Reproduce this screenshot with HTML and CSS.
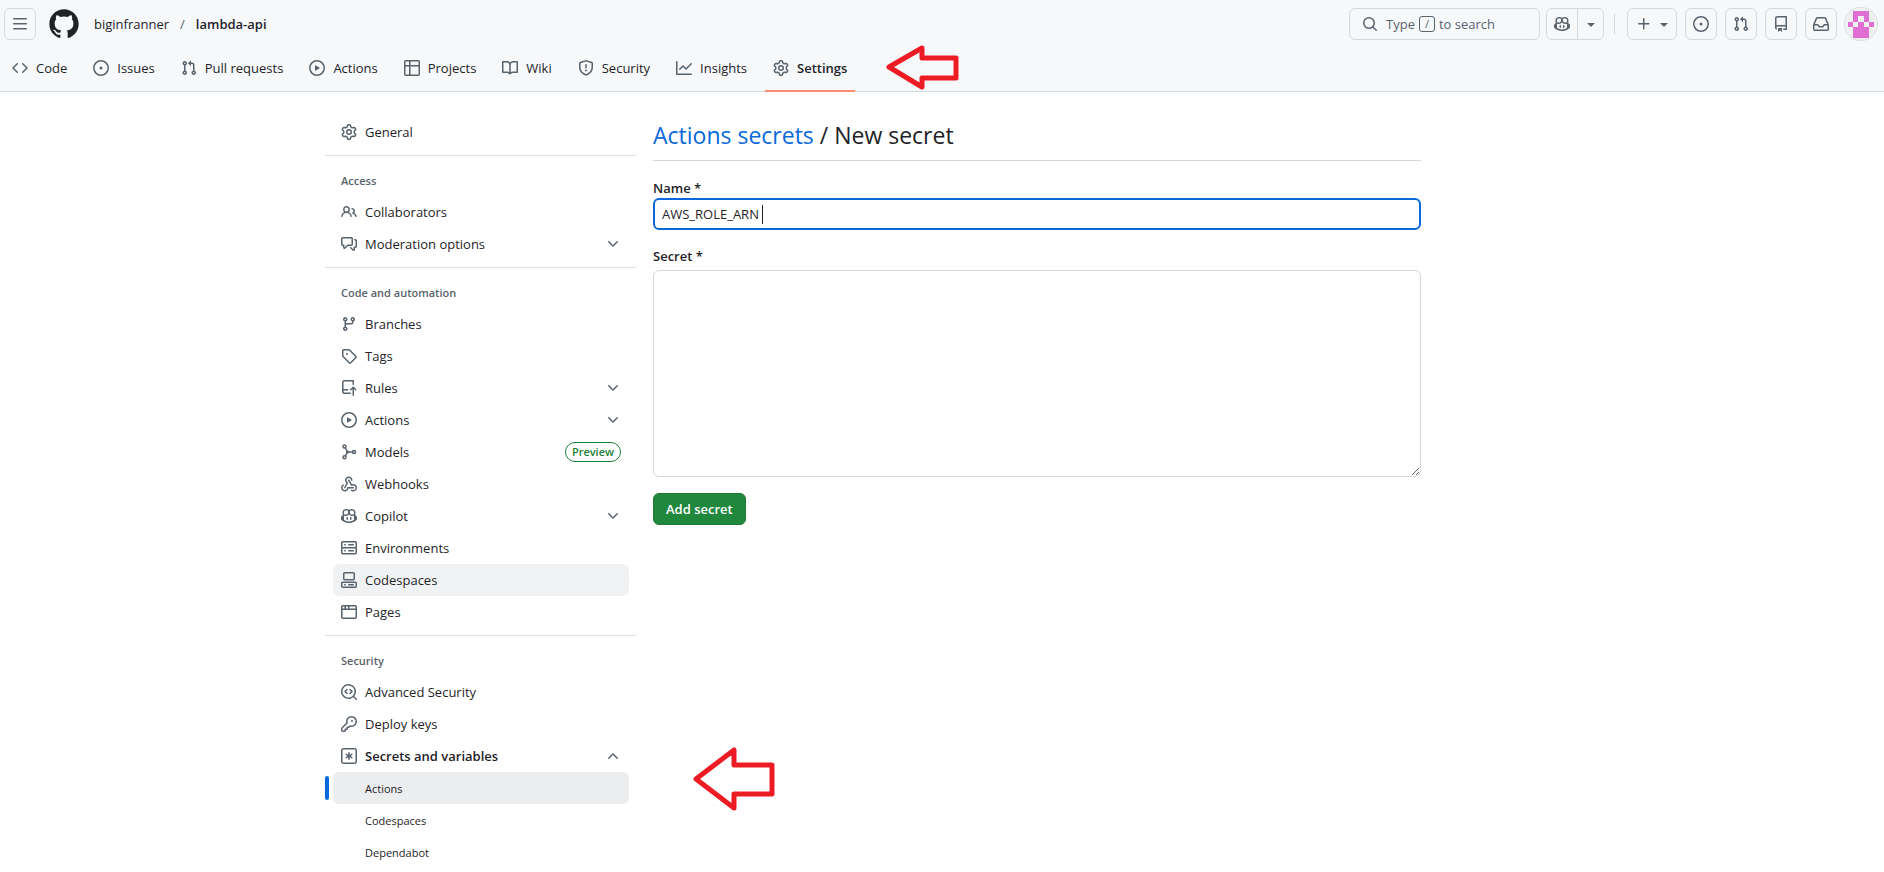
FILE: index.html
```html
<!DOCTYPE html>
<html lang="en">
  <head>
    <meta charset="UTF-8" />
    <meta name="viewport" content="width=device-width, initial-scale=1.0" />
    <title>New secret · biginfranner/lambda-api</title>
    <link rel="stylesheet" href="styles.css" />
  </head>
  <body>
    <!-- icons -->
    <svg class="sprite" aria-hidden="true">
      <symbol id="menu" viewBox="0 0 16 16"><path d="M1 2.75A.75.75 0 0 1 1.75 2h12.5a.75.75 0 0 1 0 1.5H1.75A.75.75 0 0 1 1 2.75Zm0 5A.75.75 0 0 1 1.75 7h12.5a.75.75 0 0 1 0 1.5H1.75A.75.75 0 0 1 1 7.75ZM1.75 12h12.5a.75.75 0 0 1 0 1.5H1.75a.75.75 0 0 1 0-1.5Z"/></symbol>
      <symbol id="logo" viewBox="0 0 24 24"><path d="M12 1C5.9225 1 1 5.9225 1 12C1 16.8675 4.14875 20.9787 8.52125 22.4362C9.07125 22.5325 9.2775 22.2025 9.2775 21.9137C9.2775 21.6525 9.26375 20.7862 9.26375 19.865C6.5 20.3737 5.785 19.1912 5.565 18.5725C5.44125 18.2562 4.905 17.28 4.4375 17.0187C4.0525 16.8125 3.5025 16.3037 4.42375 16.29C5.29 16.2762 5.90875 17.0875 6.115 17.4175C7.105 19.0812 8.68625 18.6137 9.31875 18.325C9.415 17.61 9.70375 17.1287 10.02 16.8537C7.5725 16.5787 5.015 15.63 5.015 11.4225C5.015 10.2262 5.44125 9.23625 6.1425 8.46625C6.0325 8.19125 5.6475 7.06375 6.2525 5.55125C6.2525 5.55125 7.17375 5.2625 9.2775 6.67875C10.1575 6.43125 11.0925 6.3075 12.0275 6.3075C12.9625 6.3075 13.8975 6.43125 14.7775 6.67875C16.8813 5.24875 17.8025 5.55125 17.8025 5.55125C18.4075 7.06375 18.0225 8.19125 17.9125 8.46625C18.6138 9.23625 19.04 10.2125 19.04 11.4225C19.04 15.6437 16.4688 16.5787 14.0213 16.8537C14.42 17.1975 14.7638 17.8575 14.7638 18.8887C14.7638 20.36 14.75 21.5425 14.75 21.9137C14.75 22.2025 14.9563 22.5462 15.5063 22.4362C19.8513 20.9787 23 16.8537 23 12C23 5.9225 18.0775 1 12 1Z"/></symbol>
      <symbol id="code" viewBox="0 0 16 16"><path d="m11.28 3.22 4.25 4.25a.75.75 0 0 1 0 1.06l-4.25 4.25a.749.749 0 0 1-1.275-.326.749.749 0 0 1 .215-.734L13.94 8l-3.72-3.72a.749.749 0 0 1 .326-1.275.749.749 0 0 1 .734.215Zm-6.56 0a.751.751 0 0 1 1.042.018.751.751 0 0 1 .018 1.042L2.06 8l3.72 3.72a.749.749 0 0 1-.326 1.275.749.749 0 0 1-.734-.215L.47 8.53a.75.75 0 0 1 0-1.06Z"/></symbol>
      <symbol id="issue" viewBox="0 0 16 16"><path d="M8 9.5a1.5 1.5 0 1 0 0-3 1.5 1.5 0 0 0 0 3Z"/><path d="M8 0a8 8 0 1 1 0 16A8 8 0 0 1 8 0ZM1.5 8a6.5 6.5 0 1 0 13 0 6.5 6.5 0 0 0-13 0Z"/></symbol>
      <symbol id="pull" viewBox="0 0 16 16"><path d="M1.5 3.25a2.25 2.25 0 1 1 3 2.122v5.256a2.251 2.251 0 1 1-1.5 0V5.372A2.25 2.25 0 0 1 1.5 3.25Zm5.677-.177L9.573.677A.25.25 0 0 1 10 .854V2.5h1A2.5 2.5 0 0 1 13.5 5v5.628a2.251 2.251 0 1 1-1.5 0V5a1 1 0 0 0-1-1h-1v1.646a.25.25 0 0 1-.427.177L7.177 3.427a.25.25 0 0 1 0-.354ZM3.75 2.5a.75.75 0 1 0 0 1.5.75.75 0 0 0 0-1.5Zm0 9.5a.75.75 0 1 0 0 1.5.75.75 0 0 0 0-1.5Zm8.25.75a.75.75 0 1 0 1.5 0 .75.75 0 0 0-1.5 0Z"/></symbol>
      <symbol id="play" viewBox="0 0 16 16"><path d="M8 0a8 8 0 1 1 0 16A8 8 0 0 1 8 0ZM1.5 8a6.5 6.5 0 1 0 13 0 6.5 6.5 0 0 0-13 0Zm4.879-2.773 4.264 2.559a.25.25 0 0 1 0 .428l-4.264 2.559A.25.25 0 0 1 6 10.559V5.442a.25.25 0 0 1 .379-.215Z"/></symbol>
      <symbol id="table" viewBox="0 0 16 16"><path d="M0 1.75C0 .784.784 0 1.75 0h12.5C15.216 0 16 .784 16 1.75v12.5A1.75 1.75 0 0 1 14.25 16H1.75A1.75 1.75 0 0 1 0 14.25ZM6.5 6.5v8h7.75a.25.25 0 0 0 .25-.25V6.5Zm8-1.5V1.75a.25.25 0 0 0-.25-.25H6.5V5Zm-13 1.5v7.75c0 .138.112.25.25.25H5v-8ZM5 5V1.5H1.75a.25.25 0 0 0-.25.25V5Z"/></symbol>
      <symbol id="book" viewBox="0 0 16 16"><path d="M0 1.75A.75.75 0 0 1 .75 1h4.253c1.227 0 2.317.59 3 1.501A3.743 3.743 0 0 1 11.006 1h4.245a.75.75 0 0 1 .75.75v10.5a.75.75 0 0 1-.75.75h-4.507a2.25 2.25 0 0 0-1.591.659l-.622.621a.75.75 0 0 1-1.06 0l-.622-.621A2.25 2.25 0 0 0 5.258 13H.75a.75.75 0 0 1-.75-.75Zm7.251 10.324.004-5.073-.002-2.253A2.25 2.25 0 0 0 5.003 2.5H1.5v9h3.757a3.75 3.75 0 0 1 1.994.574ZM8.755 4.75l-.004 7.322a3.752 3.752 0 0 1 1.992-.572H14.5v-9h-3.495a2.25 2.25 0 0 0-2.25 2.25Z"/></symbol>
      <symbol id="shield" viewBox="0 0 16 16"><path d="M7.467.133a1.748 1.748 0 0 1 1.066 0l5.25 1.68A1.75 1.75 0 0 1 15 3.48V7c0 1.566-.32 3.182-1.303 4.682-.983 1.498-2.585 2.813-5.032 3.855a1.697 1.697 0 0 1-1.33 0c-2.447-1.042-4.049-2.357-5.032-3.855C1.32 10.182 1 8.566 1 7V3.48a1.75 1.75 0 0 1 1.217-1.667Zm.61 1.429a.25.25 0 0 0-.153 0l-5.25 1.68a.25.25 0 0 0-.174.238V7c0 1.358.275 2.666 1.057 3.86.784 1.194 2.121 2.34 4.366 3.297a.196.196 0 0 0 .154 0c2.245-.956 3.582-2.104 4.366-3.298C13.225 9.666 13.5 8.36 13.5 7V3.48a.251.251 0 0 0-.174-.237l-5.25-1.68ZM8.75 4.75v3a.75.75 0 0 1-1.5 0v-3a.75.75 0 0 1 1.5 0ZM9 10.5a1 1 0 1 1-2 0 1 1 0 0 1 2 0Z"/></symbol>
      <symbol id="graph" viewBox="0 0 16 16"><path d="M1.5 1.75V13.5h13.75a.75.75 0 0 1 0 1.5H.75a.75.75 0 0 1-.75-.75V1.75a.75.75 0 0 1 1.5 0Zm14.28 2.53-5.25 5.25a.75.75 0 0 1-1.06 0L7 7.06 4.28 9.78a.751.751 0 0 1-1.042-.018.751.751 0 0 1-.018-1.042l3.25-3.25a.75.75 0 0 1 1.06 0L10 7.94l4.72-4.72a.751.751 0 0 1 1.042.018.751.751 0 0 1 .018 1.042Z"/></symbol>
      <symbol id="gear" viewBox="0 0 16 16"><path d="M8 0a8.2 8.2 0 0 1 .701.031C9.444.095 9.99.645 10.16 1.29l.288 1.107c.018.066.079.158.212.224.231.114.454.243.668.386.123.082.233.09.299.071l1.103-.303c.644-.176 1.392.021 1.82.63.27.385.506.792.704 1.218.315.675.111 1.422-.364 1.891l-.814.806c-.049.048-.098.147-.088.294.016.257.016.515 0 .772-.01.147.038.246.088.294l.814.806c.475.469.679 1.216.364 1.891a7.977 7.977 0 0 1-.704 1.217c-.428.61-1.176.807-1.82.63l-1.102-.302c-.067-.019-.177-.011-.3.071a5.909 5.909 0 0 1-.668.386c-.133.066-.194.158-.211.224l-.29 1.106c-.168.646-.715 1.196-1.458 1.26a8.006 8.006 0 0 1-1.402 0c-.743-.064-1.289-.614-1.458-1.26l-.289-1.106c-.018-.066-.079-.158-.212-.224a5.738 5.738 0 0 1-.668-.386c-.123-.082-.233-.09-.299-.071l-1.103.303c-.644.176-1.392-.021-1.82-.63a8.12 8.12 0 0 1-.704-1.218c-.315-.675-.111-1.422.363-1.891l.815-.806c.05-.048.098-.147.088-.294a6.214 6.214 0 0 1 0-.772c.01-.147-.038-.246-.088-.294l-.815-.806C.635 6.045.431 5.298.746 4.623a7.92 7.92 0 0 1 .704-1.217c.428-.61 1.176-.807 1.82-.63l1.102.302c.067.019.177.011.3-.071.214-.143.437-.272.668-.386.133-.066.194-.158.211-.224l.29-1.106C6.009.645 6.556.095 7.299.03 7.53.01 7.764 0 8 0Zm-.571 1.525c-.036.003-.108.036-.137.146l-.289 1.105c-.147.561-.549.967-.998 1.189-.173.086-.34.183-.5.29-.417.278-.97.423-1.529.27l-1.103-.303c-.109-.03-.175.016-.195.045-.22.312-.412.644-.573.99-.014.031-.021.11.059.19l.815.806c.411.406.562.957.53 1.456a4.709 4.709 0 0 0 0 .582c.032.499-.119 1.05-.53 1.456l-.815.806c-.081.08-.073.159-.059.19.162.346.353.677.573.989.02.03.085.076.195.046l1.102-.303c.56-.153 1.113-.008 1.53.27.161.107.328.204.501.29.447.222.85.629.997 1.189l.289 1.105c.029.109.101.143.137.146a6.6 6.6 0 0 0 1.142 0c.036-.003.108-.036.137-.146l.289-1.105c.147-.561.549-.967.998-1.189.173-.086.34-.183.5-.29.417-.278.97-.423 1.529-.27l1.103.303c.109.029.175-.016.195-.045.22-.313.411-.644.573-.99.014-.031.021-.11-.059-.19l-.815-.806c-.411-.406-.562-.957-.53-1.456a4.709 4.709 0 0 0 0-.582c-.032-.499.119-1.05.53-1.456l.815-.806c.081-.08.073-.159.059-.19a6.464 6.464 0 0 0-.573-.989c-.02-.03-.085-.076-.195-.046l-1.102.303c-.56.153-1.113.008-1.53-.27a4.44 4.44 0 0 0-.501-.29c-.447-.222-.85-.629-.997-1.189l-.289-1.105c-.029-.11-.101-.143-.137-.146a6.6 6.6 0 0 0-1.142 0ZM11 8a3 3 0 1 1-6 0 3 3 0 0 1 6 0ZM9.5 8a1.5 1.5 0 1 0-3.001.001A1.5 1.5 0 0 0 9.5 8Z"/></symbol>
      <symbol id="people" viewBox="0 0 16 16"><path d="M2 5.5a3.5 3.5 0 1 1 5.898 2.549 5.508 5.508 0 0 1 3.034 4.084.75.75 0 1 1-1.482.235 4 4 0 0 0-7.9 0 .75.75 0 0 1-1.482-.236A5.507 5.507 0 0 1 3.102 8.05 3.493 3.493 0 0 1 2 5.5ZM11 4a3.001 3.001 0 0 1 2.22 5.018 5.01 5.01 0 0 1 2.56 3.012.749.749 0 0 1-.885.954.752.752 0 0 1-.549-.514 3.507 3.507 0 0 0-2.522-2.372.75.75 0 0 1-.574-.73v-.352a.75.75 0 0 1 .416-.672A1.5 1.5 0 0 0 11 5.5.75.75 0 0 1 11 4Zm-5.5-.5a2 2 0 1 0-.001 3.999A2 2 0 0 0 5.5 3.5Z"/></symbol>
      <symbol id="comments" viewBox="0 0 16 16"><path d="M1.75 1h8.5c.966 0 1.75.784 1.75 1.75v5.5A1.75 1.75 0 0 1 10.25 10H7.061l-2.574 2.573A1.458 1.458 0 0 1 2 11.543V10h-.25A1.75 1.75 0 0 1 0 8.25v-5.5C0 1.784.784 1 1.75 1ZM1.5 2.75v5.5c0 .138.112.25.25.25h1a.75.75 0 0 1 .75.75v2.19l2.72-2.72a.749.749 0 0 1 .53-.22h3.5a.25.25 0 0 0 .25-.25v-5.5a.25.25 0 0 0-.25-.25h-8.5a.25.25 0 0 0-.25.25Zm13 2a.25.25 0 0 0-.25-.25h-.5a.75.75 0 0 1 0-1.5h.5c.966 0 1.75.784 1.75 1.75v5.5A1.75 1.75 0 0 1 14.25 12H14v1.543a1.458 1.458 0 0 1-2.487 1.03L9.22 12.28a.749.749 0 0 1 .326-1.275.749.749 0 0 1 .734.215l2.22 2.22v-2.19a.75.75 0 0 1 .75-.75h1a.25.25 0 0 0 .25-.25Z"/></symbol>
      <symbol id="branch" viewBox="0 0 16 16"><path d="M9.5 3.25a2.25 2.25 0 1 1 3 2.122V6A2.5 2.5 0 0 1 10 8.5H6a1 1 0 0 0-1 1v1.128a2.251 2.251 0 1 1-1.5 0V5.372a2.25 2.25 0 1 1 1.5 0v1.836A2.493 2.493 0 0 1 6 7h4a1 1 0 0 0 1-1v-.628A2.25 2.25 0 0 1 9.5 3.25Zm-6 0a.75.75 0 1 0 1.5 0 .75.75 0 0 0-1.5 0Zm8.25-.75a.75.75 0 1 0 0 1.5.75.75 0 0 0 0-1.5ZM4.25 12a.75.75 0 1 0 0 1.5.75.75 0 0 0 0-1.5Z"/></symbol>
      <symbol id="tag" viewBox="0 0 16 16"><path d="M1 7.775V2.75C1 1.784 1.784 1 2.75 1h5.025c.464 0 .91.184 1.238.513l6.25 6.25a1.75 1.75 0 0 1 0 2.474l-5.026 5.026a1.75 1.75 0 0 1-2.474 0l-6.25-6.25A1.752 1.752 0 0 1 1 7.775Zm1.5 0c0 .066.026.13.073.177l6.25 6.25a.25.25 0 0 0 .354 0l5.025-5.025a.25.25 0 0 0 0-.354l-6.25-6.25a.25.25 0 0 0-.177-.073H2.75a.25.25 0 0 0-.25.25ZM6 5a1 1 0 1 1 0 2 1 1 0 0 1 0-2Z"/></symbol>
      <symbol id="repo-push" viewBox="0 0 16 16"><path d="M1 2.5A2.5 2.5 0 0 1 3.5 0h8.75a.75.75 0 0 1 .75.75v3.5a.75.75 0 0 1-1.5 0V1.5h-8a1 1 0 0 0-1 1v6.708A2.493 2.493 0 0 1 3.5 9h3.25a.75.75 0 0 1 0 1.5H3.5a1 1 0 0 0 0 2h5.75a.75.75 0 0 1 0 1.5H3.5A2.5 2.5 0 0 1 1 11.5Zm13.23 7.79h-.001l-1.224-1.224v6.184a.75.75 0 0 1-1.5 0V9.066L10.28 10.29a.75.75 0 0 1-1.06-1.061l2.505-2.504a.75.75 0 0 1 1.06 0L15.29 9.23a.751.751 0 0 1-.018 1.042.751.751 0 0 1-1.042.018Z"/></symbol>
      <symbol id="model" viewBox="0 0 16 16"><g fill="none" stroke="currentColor" stroke-width="1.5"><circle cx="3.5" cy="2.5" r="1.5"/><circle cx="3.5" cy="13.25" r="1.5"/><circle cx="13" cy="8" r="1.5"/><path d="M4.4 4 6.5 8l-2.1 3.8M6.5 8h5"/></g><circle cx="6.5" cy="8" r="1.5"/></symbol>
      <symbol id="webhook" viewBox="0 0 16 16"><path d="M5.5 4.25a2.25 2.25 0 0 1 4.5 0 .75.75 0 0 0 1.5 0 3.75 3.75 0 1 0-6.14 2.889l-2.272 4.258a.75.75 0 0 0 1.324.706L7 7.25a.75.75 0 0 0-.309-1.015A2.25 2.25 0 0 1 5.5 4.25Z"/><path d="M7.364 3.607a.75.75 0 0 1 1.03.257l2.608 4.349a3.75 3.75 0 1 1-.628 6.785.75.75 0 0 1 .752-1.299 2.25 2.25 0 1 0-.033-3.88.75.75 0 0 1-1.03-.256L7.107 4.636a.75.75 0 0 1 .257-1.03Z"/><path d="M2.9 8.776A.75.75 0 0 1 2.625 9.8 2.25 2.25 0 1 0 6 11.75a.75.75 0 0 1 .75-.751h5.5a.75.75 0 0 1 0 1.5H7.425a3.751 3.751 0 1 1-5.55-3.998.75.75 0 0 1 1.024.274Z"/></symbol>
      <symbol id="copilot" viewBox="0 0 16 16"><path d="M7.998 15.035c-4.562 0-7.873-2.914-7.998-3.749V9.338c.085-.628.677-1.686 1.588-2.065.013-.07.024-.143.036-.218.029-.183.06-.384.126-.612-.201-.508-.254-1.084-.254-1.656 0-.87.128-1.769.693-2.484.579-.733 1.494-1.124 2.724-1.261 1.206-.134 2.262.034 2.944.765.05.053.096.108.139.165.044-.057.094-.112.143-.165.682-.731 1.738-.899 2.944-.765 1.23.137 2.145.528 2.724 1.261.566.715.693 1.614.693 2.484 0 .572-.053 1.148-.254 1.656.066.228.098.429.126.612.012.076.024.148.037.218.924.385 1.522 1.471 1.591 2.095v1.872c0 .766-3.351 3.795-8.002 3.795Zm0-1.485c2.28 0 4.584-1.11 5.002-1.433V7.862l-.023-.116c-.49.21-1.075.291-1.727.291-1.146 0-2.059-.327-2.71-.991A3.222 3.222 0 0 1 8 6.303a3.24 3.24 0 0 1-.544.743c-.65.664-1.563.991-2.71.991-.652 0-1.236-.081-1.727-.291l-.023.116v4.255c.419.323 2.722 1.433 5.002 1.433ZM6.762 2.83c-.193-.206-.637-.413-1.682-.297-1.019.113-1.479.404-1.713.7-.247.312-.369.789-.369 1.554 0 .793.129 1.171.308 1.371.162.181.519.379 1.442.379.853 0 1.339-.235 1.638-.54.315-.322.527-.827.617-1.553.117-.935-.037-1.395-.241-1.614Zm4.155-.297c-1.044-.116-1.488.091-1.681.297-.204.219-.359.679-.242 1.614.091.726.303 1.231.618 1.553.299.305.784.54 1.638.54.922 0 1.28-.198 1.442-.379.179-.2.308-.578.308-1.371 0-.765-.123-1.242-.37-1.554-.233-.296-.693-.587-1.713-.7Z"/><path d="M6.25 9.037a.75.75 0 0 1 .75.75v1.501a.75.75 0 0 1-1.5 0V9.787a.75.75 0 0 1 .75-.75Zm4.25.75v1.501a.75.75 0 0 1-1.5 0V9.787a.75.75 0 0 1 1.5 0Z"/></symbol>
      <symbol id="server" viewBox="0 0 16 16"><path d="M1.75 1h12.5c.966 0 1.75.784 1.75 1.75v4c0 .372-.116.717-.314 1 .198.283.314.628.314 1v4a1.75 1.75 0 0 1-1.75 1.75H1.75A1.75 1.75 0 0 1 0 12.75v-4c0-.358.109-.707.314-1a1.739 1.739 0 0 1-.314-1v-4C0 1.784.784 1 1.75 1ZM1.5 2.75v4c0 .138.112.25.25.25h12.5a.25.25 0 0 0 .25-.25v-4a.25.25 0 0 0-.25-.25H1.75a.25.25 0 0 0-.25.25Zm.25 5.75a.25.25 0 0 0-.25.25v4c0 .138.112.25.25.25h12.5a.25.25 0 0 0 .25-.25v-4a.25.25 0 0 0-.25-.25ZM7 4.75A.75.75 0 0 1 7.75 4h4.5a.75.75 0 0 1 0 1.5h-4.5A.75.75 0 0 1 7 4.75ZM7.75 10h4.5a.75.75 0 0 1 0 1.5h-4.5a.75.75 0 0 1 0-1.5ZM3 4.75A.75.75 0 0 1 3.75 4h.5a.75.75 0 0 1 0 1.5h-.5A.75.75 0 0 1 3 4.75ZM3.75 10h.5a.75.75 0 0 1 0 1.5h-.5a.75.75 0 0 1 0-1.5Z"/></symbol>
      <symbol id="codespaces" viewBox="0 0 16 16"><path d="M0 11.25c0-.966.784-1.75 1.75-1.75h12.5c.966 0 1.75.784 1.75 1.75v3A1.75 1.75 0 0 1 14.25 16H1.75A1.75 1.75 0 0 1 0 14.25Zm2-9.5C2 .784 2.784 0 3.75 0h8.5C13.216 0 14 .784 14 1.75v5a1.75 1.75 0 0 1-1.75 1.75h-8.5A1.75 1.75 0 0 1 2 6.75Zm1.75-.25a.25.25 0 0 0-.25.25v5c0 .138.112.25.25.25h8.5a.25.25 0 0 0 .25-.25v-5a.25.25 0 0 0-.25-.25Zm-2 9.5a.25.25 0 0 0-.25.25v3c0 .138.112.25.25.25h12.5a.25.25 0 0 0 .25-.25v-3a.25.25 0 0 0-.25-.25Z"/><path d="M7 12.75a.75.75 0 0 1 .75-.75h4.5a.75.75 0 0 1 0 1.5h-4.5a.75.75 0 0 1-.75-.75Zm-4 0a.75.75 0 0 1 .75-.75h.5a.75.75 0 0 1 0 1.5h-.5a.75.75 0 0 1-.75-.75Z"/></symbol>
      <symbol id="browser" viewBox="0 0 16 16"><path d="M0 2.75C0 1.784.784 1 1.75 1h12.5c.966 0 1.75.784 1.75 1.75v10.5A1.75 1.75 0 0 1 14.25 15H1.75A1.75 1.75 0 0 1 0 13.25ZM14.5 6h-13v7.25c0 .138.112.25.25.25h12.5a.25.25 0 0 0 .25-.25Zm-6-3.5v2h6V2.75a.25.25 0 0 0-.25-.25ZM5 2.5v2h2v-2Zm-3.25 0a.25.25 0 0 0-.25.25V4.5h2v-2Z"/></symbol>
      <symbol id="codescan" viewBox="0 0 16 16"><path d="M8.47 4.97a.75.75 0 0 0 0 1.06L9.94 7.5 8.47 8.97a.75.75 0 1 0 1.06 1.06l2-2a.75.75 0 0 0 0-1.06l-2-2a.75.75 0 0 0-1.06 0ZM6.53 6.03a.75.75 0 0 0-1.06-1.06l-2 2a.75.75 0 0 0 0 1.06l2 2a.75.75 0 1 0 1.06-1.06L5.06 7.5l1.47-1.47Z"/><path d="M12.246 13.307a7.501 7.501 0 1 1 1.06-1.06l2.474 2.473a.75.75 0 1 1-1.06 1.06l-2.474-2.473ZM1.5 7.5a6.002 6.002 0 0 0 3.608 5.504 6.002 6.002 0 0 0 6.486-1.117.748.748 0 0 1 .292-.293A6 6 0 1 0 1.5 7.5Z"/></symbol>
      <symbol id="key" viewBox="0 0 16 16"><path d="M10.5 0a5.499 5.499 0 1 1-1.288 10.848l-.932.932a.749.749 0 0 1-.53.22H7v.75a.749.749 0 0 1-.22.53l-.5.5a.749.749 0 0 1-.53.22H5v.75a.749.749 0 0 1-.22.53l-.5.5a.749.749 0 0 1-.53.22h-2A1.75 1.75 0 0 1 0 14.25v-2c0-.199.079-.389.22-.53l4.932-4.932A5.5 5.5 0 0 1 10.5 0Zm-4 5.5c-.001.431.069.86.205 1.269a.75.75 0 0 1-.181.768L1.5 12.56v1.69c0 .138.112.25.25.25h1.69l.06-.06v-1.19a.75.75 0 0 1 .75-.75h1.19l.06-.06v-1.19a.75.75 0 0 1 .75-.75h1.19l1.023-1.025a.75.75 0 0 1 .768-.18A4 4 0 1 0 6.5 5.5ZM11 6a1 1 0 1 1 0-2 1 1 0 0 1 0 2Z"/></symbol>
      <symbol id="asterisk" viewBox="0 0 16 16"><path d="M0 2.75A2.75 2.75 0 0 1 2.75 0h10.5A2.75 2.75 0 0 1 16 2.75v10.5A2.75 2.75 0 0 1 13.25 16H2.75A2.75 2.75 0 0 1 0 13.25ZM2.75 1.5c-.69 0-1.25.56-1.25 1.25v10.5c0 .69.56 1.25 1.25 1.25h10.5c.69 0 1.25-.56 1.25-1.25V2.75c0-.69-.56-1.25-1.25-1.25Z"/><path d="M8 4a.75.75 0 0 1 .75.75V6.7l1.69-.975a.75.75 0 0 1 .75 1.3L9.5 8l1.69.976a.75.75 0 0 1-.75 1.298L8.75 9.3v1.951a.75.75 0 0 1-1.5 0V9.299l-1.69.976a.75.75 0 0 1-.75-1.3L6.5 8l-1.69-.975a.75.75 0 0 1 .75-1.3l1.69.976V4.75A.75.75 0 0 1 8 4Z"/></symbol>
      <symbol id="chevron" viewBox="0 0 16 16"><path d="M12.78 5.22a.749.749 0 0 1 0 1.06l-4.25 4.25a.749.749 0 0 1-1.06 0L3.22 6.28a.749.749 0 1 1 1.06-1.06L8 8.939l3.72-3.719a.749.749 0 0 1 1.06 0Z"/></symbol>
      <symbol id="triangle" viewBox="0 0 16 16"><path d="m4.427 7.427 3.396 3.396a.25.25 0 0 0 .354 0l3.396-3.396A.25.25 0 0 0 11.396 7H4.604a.25.25 0 0 0-.177.427Z"/></symbol>
      <symbol id="plus" viewBox="0 0 16 16"><path d="M7.75 2a.75.75 0 0 1 .75.75V7h4.25a.75.75 0 0 1 0 1.5H8.5v4.25a.75.75 0 0 1-1.5 0V8.5H2.75a.75.75 0 0 1 0-1.5H7V2.75A.75.75 0 0 1 7.75 2Z"/></symbol>
      <symbol id="search" viewBox="0 0 16 16"><path d="M10.68 11.74a6 6 0 0 1-7.922-8.982 6 6 0 0 1 8.982 7.922l3.04 3.04a.749.749 0 0 1-.326 1.275.749.749 0 0 1-.734-.215ZM11.5 7a4.499 4.499 0 1 0-8.997 0A4.499 4.499 0 0 0 11.5 7Z"/></symbol>
      <symbol id="repo" viewBox="0 0 16 16"><path d="M2 2.5A2.5 2.5 0 0 1 4.5 0h8.75a.75.75 0 0 1 .75.75v12.5a.75.75 0 0 1-.75.75h-2.5a.75.75 0 0 1 0-1.5h1.75v-2h-8a1 1 0 0 0-.714 1.7.75.75 0 1 1-1.072 1.05A2.495 2.495 0 0 1 2 11.5Zm10.5-1h-8a1 1 0 0 0-1 1v6.708A2.486 2.486 0 0 1 4.5 9h8ZM5 12.25a.25.25 0 0 1 .25-.25h3.5a.25.25 0 0 1 .25.25v3.25a.25.25 0 0 1-.4.2l-1.45-1.087a.249.249 0 0 0-.3 0L5.4 15.7a.25.25 0 0 1-.4-.2Z"/></symbol>
      <symbol id="inbox" viewBox="0 0 16 16"><path d="M2.8 2.06A1.75 1.75 0 0 1 4.41 1h7.18c.7 0 1.333.417 1.61 1.06l2.74 6.395c.04.093.06.194.06.295v4.5A1.75 1.75 0 0 1 14.25 15H1.75A1.75 1.75 0 0 1 0 13.25v-4.5c0-.101.02-.202.06-.295Zm1.61.44a.25.25 0 0 0-.23.152L1.887 8H4.75a.75.75 0 0 1 .6.3L6.625 10h2.75l1.275-1.7a.75.75 0 0 1 .6-.3h2.863L11.82 2.652a.25.25 0 0 0-.23-.152Zm10.09 7h-2.875l-1.275 1.7a.75.75 0 0 1-.6.3h-3.5a.75.75 0 0 1-.6-.3L4.375 9.5H1.5v3.75c0 .138.112.25.25.25h12.5a.25.25 0 0 0 .25-.25Z"/></symbol>
    </svg>

    <header class="header">
      <div class="topbar">
        <button class="iconBtn" type="button" aria-label="Open menu"><svg class="icon"><use href="#menu" /></svg></button>
        <a class="logo" href="#" aria-label="Homepage"><svg><use href="#logo" /></svg></a>
        <nav class="crumbs" aria-label="Repository">
          <a href="#">biginfranner</a>
          <span class="slash">/</span>
          <a class="repoName" href="#">lambda-api</a>
        </nav>

        <div class="actions">
          <button class="searchBtn" type="button"><svg class="icon"><use href="#search" /></svg><span>Type</span><kbd>/</kbd><span>to search</span></button>
          <div class="split">
            <button type="button" aria-label="Copilot"><svg class="icon"><use href="#copilot" /></svg></button>
            <button class="splitCaret" type="button" aria-label="Copilot options"><svg class="icon"><use href="#triangle" /></svg></button>
          </div>
          <span class="separator"></span>
          <button class="iconBtn createBtn" type="button" aria-label="Create new"><svg class="icon"><use href="#plus" /></svg><svg class="icon"><use href="#triangle" /></svg></button>
          <a class="iconBtn" href="#" aria-label="Issues"><svg class="icon"><use href="#issue" /></svg></a>
          <a class="iconBtn" href="#" aria-label="Pull requests"><svg class="icon"><use href="#pull" /></svg></a>
          <a class="iconBtn" href="#" aria-label="Repositories"><svg class="icon"><use href="#repo" /></svg></a>
          <a class="iconBtn" href="#" aria-label="Notifications"><svg class="icon"><use href="#inbox" /></svg></a>
          <button class="avatar" type="button" aria-label="User menu">
            <svg viewBox="0 0 32 32"><path fill="#f0f0f0" d="M0 0h32v32H0z" /><path fill="#df6fd3" d="M8 3h16v5H8zM8 8h5v6H8zM19 8h5v6h-5zM3 14h5v5H3zM13 14h6v5h-6zM24 14h5v5h-5zM8 19h16v11H8z" /></svg>
          </button>
        </div>
      </div>

      <nav class="tabs" aria-label="Repository sections">
        <a href="#"><svg class="icon"><use href="#code" /></svg>Code</a>
        <a href="#"><svg class="icon"><use href="#issue" /></svg>Issues</a>
        <a href="#"><svg class="icon"><use href="#pull" /></svg>Pull requests</a>
        <a href="#"><svg class="icon"><use href="#play" /></svg>Actions</a>
        <a href="#"><svg class="icon"><use href="#table" /></svg>Projects</a>
        <a href="#"><svg class="icon"><use href="#book" /></svg>Wiki</a>
        <a href="#"><svg class="icon"><use href="#shield" /></svg>Security</a>
        <a href="#"><svg class="icon"><use href="#graph" /></svg>Insights</a>
        <a class="current" href="#"><svg class="icon"><use href="#gear" /></svg>Settings
          <svg class="arrow arrowTop" viewBox="0 0 74 46"><path d="M4 23 37 4v10h34v20H37v9z" /></svg>
        </a>
      </nav>
    </header>

    <div class="container">
      <nav class="sidebar" aria-label="Settings">
        <ul>
          <li><a href="#"><svg class="icon"><use href="#gear" /></svg>General</a></li>
        </ul>
        <hr />
        <h3>Access</h3>
        <ul>
          <li><a href="#"><svg class="icon"><use href="#people" /></svg>Collaborators</a></li>
          <li><button type="button"><svg class="icon"><use href="#comments" /></svg>Moderation options<svg class="icon chevron"><use href="#chevron" /></svg></button></li>
        </ul>
        <hr />
        <h3>Code and automation</h3>
        <ul>
          <li><a href="#"><svg class="icon"><use href="#branch" /></svg>Branches</a></li>
          <li><a href="#"><svg class="icon"><use href="#tag" /></svg>Tags</a></li>
          <li><button type="button"><svg class="icon"><use href="#repo-push" /></svg>Rules<svg class="icon chevron"><use href="#chevron" /></svg></button></li>
          <li><button type="button"><svg class="icon"><use href="#play" /></svg>Actions<svg class="icon chevron"><use href="#chevron" /></svg></button></li>
          <li><a href="#"><svg class="icon"><use href="#model" /></svg>Models<span class="badge">Preview</span></a></li>
          <li><a href="#"><svg class="icon"><use href="#webhook" /></svg>Webhooks</a></li>
          <li><button type="button"><svg class="icon"><use href="#copilot" /></svg>Copilot<svg class="icon chevron"><use href="#chevron" /></svg></button></li>
          <li><a href="#"><svg class="icon"><use href="#server" /></svg>Environments</a></li>
          <li><a class="hovered" href="#"><svg class="icon"><use href="#codespaces" /></svg>Codespaces</a></li>
          <li><a href="#"><svg class="icon"><use href="#browser" /></svg>Pages</a></li>
        </ul>
        <hr />
        <h3>Security</h3>
        <ul>
          <li><a href="#"><svg class="icon"><use href="#codescan" /></svg>Advanced Security</a></li>
          <li><a href="#"><svg class="icon"><use href="#key" /></svg>Deploy keys</a></li>
          <li>
            <button class="open" type="button" aria-expanded="true"><svg class="icon"><use href="#asterisk" /></svg>Secrets and variables<svg class="icon chevron"><use href="#chevron" /></svg></button>
            <ul class="submenu">
              <li class="selected">
                <a href="#">Actions</a>
                <svg class="arrow arrowSide" viewBox="0 0 82 64"><path d="M3 32 41 3v15h38v29H41v14z" /></svg>
              </li>
              <li><a href="#">Codespaces</a></li>
              <li><a href="#">Dependabot</a></li>
            </ul>
          </li>
        </ul>
      </nav>

      <main class="content">
        <h1><a href="#">Actions secrets</a> / New secret</h1>
        <form class="secretForm">
          <label for="secretName">Name *</label>
          <div class="nameField">
            <input type="text" id="secretName" name="secretName" value="AWS_ROLE_ARN" spellcheck="false" required />
          </div>
          <label for="secretValue">Secret *</label>
          <textarea id="secretValue" name="secretValue" required></textarea>
          <button type="submit">Add secret</button>
        </form>
      </main>
    </div>
  </body>
</html>
```
FILE: styles.css
```css
* {
  box-sizing: border-box;
}

html {
  height: 100%;
}

body {
  height: 100%;
  margin: 0;
  overflow: hidden;
  font-family: "Segoe UI", "Open Sans", "Noto Sans", sans-serif;
  font-size: 13px;
  line-height: 20px;
  color: #1f2328;
  background-color: #fff;
}

a {
  color: inherit;
  text-decoration: none;
}

button,
input,
textarea {
  font: inherit;
  color: inherit;
}

button {
  background: none;
  cursor: pointer;
}

ul {
  list-style: none;
  margin: 0;
  padding: 0;
}

.sprite {
  display: none;
}

.icon {
  flex: none;
  width: 16px;
  height: 16px;
  color: #59636e;
  fill: currentColor;
}

/* header */
.header {
  background-color: #f6f8fa;
  border-bottom: 1px solid #d1d9e0;
}

.topbar {
  display: flex;
  align-items: center;
  padding: 8px 7px 4px 4px;
}

.iconBtn {
  display: flex;
  align-items: center;
  justify-content: center;
  width: 32px;
  height: 32px;
  padding: 0;
  border: 1px solid #d1d9e0;
  border-radius: 6px;
}

.logo {
  width: 32px;
  height: 32px;
  margin: 0 14px 0 12px;
}

.logo svg {
  display: block;
  width: 32px;
  height: 32px;
  fill: #1f2328;
}

.crumbs {
  display: flex;
  gap: 11px;
}

.slash {
  color: #59636e;
}

.repoName {
  font-weight: 600;
}

.actions {
  display: flex;
  align-items: center;
  gap: 8px;
  margin-left: auto;
}

.searchBtn {
  display: flex;
  align-items: center;
  width: 191px;
  height: 32px;
  margin-right: -2px;
  padding: 0 12px;
  border: 1px solid #d1d9e0;
  border-radius: 6px;
  color: #59636e;
}

.searchBtn .icon {
  margin-right: 8px;
}

kbd {
  width: 16px;
  height: 16px;
  margin: 0 4px;
  border: 1px solid #59636e;
  border-radius: 3px;
  font-family: inherit;
  font-size: 11px;
  line-height: 14px;
}

.split {
  display: flex;
  height: 32px;
  border: 1px solid #d1d9e0;
  border-radius: 6px;
}

.split button {
  display: flex;
  align-items: center;
  justify-content: center;
  width: 30px;
  padding: 0;
  border: 0;
}

.split .splitCaret {
  width: 26px;
  border-left: 1px solid #d1d9e0;
}

.separator {
  width: 1px;
  height: 20px;
  margin: 0 4px 0 2px;
  background-color: #d1d9e0;
}

.createBtn {
  gap: 4px;
  width: 50px;
  padding-left: 3px;
}

.avatar {
  width: 32px;
  height: 32px;
  padding: 0;
  border: 0;
  border-radius: 50%;
  box-shadow: 0 0 0 1px #d9dee3;
  overflow: hidden;
}

.avatar svg {
  display: block;
}

.tabs {
  display: flex;
  gap: 10px;
  height: 48px;
  margin-bottom: -1px;
  padding: 0 4px;
}

.tabs a {
  position: relative;
  display: flex;
  align-items: center;
  gap: 8px;
  padding: 2px 8px 0;
  border-bottom: 2px solid transparent;
}

.tabs .current {
  font-weight: 600;
  border-color: #fd8c73;
}

/* sidebar */
.container {
  display: flex;
  gap: 16px;
  max-width: 1234px;
  margin: 0 auto;
}

.sidebar {
  flex: none;
  width: 312px;
  padding-top: 24px;
}

.sidebar ul {
  padding: 0 8px;
}

.sidebar hr {
  height: 1px;
  margin: 7px 0 8px;
  border: 0;
  background-color: #dfe2e5;
}

.sidebar h3 {
  margin: 0;
  padding: 7px 16px 5px;
  font-size: 11px;
  font-weight: 600;
  color: #59636e;
}

.sidebar a,
.sidebar button {
  display: flex;
  align-items: center;
  gap: 8px;
  width: 100%;
  height: 32px;
  padding: 0 8px;
  border: 0;
  border-radius: 6px;
  text-align: left;
}

.sidebar .hovered {
  background-color: #f1f2f4;
}

.sidebar .open {
  font-weight: 600;
}

.chevron,
.badge {
  margin-left: auto;
}

.open .chevron {
  transform: rotate(180deg);
}

.badge {
  padding: 0 6px;
  border: 1px solid #1a7f37;
  border-radius: 10px;
  font-size: 11px;
  font-weight: 600;
  line-height: 18px;
  color: #1a7f37;
}

.sidebar .submenu {
  padding: 0;
}

.submenu li {
  position: relative;
}

.submenu a {
  padding: 1px 8px 0 32px;
  font-size: 11px;
}

.selected a {
  background-color: #ecedef;
}

.selected::before {
  content: "";
  position: absolute;
  top: 4px;
  left: -8px;
  width: 4px;
  height: 24px;
  border-radius: 6px;
  background-color: #0969da;
}

/* new secret form */
.content {
  flex: 1;
  max-width: 768px;
  padding-top: 25px;
}

.content h1 {
  margin: 0 0 17px;
  padding-bottom: 7px;
  border-bottom: 1px solid #d1d9e0;
  font-size: 23px;
  font-weight: 400;
  line-height: 36px;
}

.content h1 a {
  color: #0969da;
}

.secretForm {
  display: flex;
  flex-direction: column;
  align-items: flex-start;
}

.secretForm label {
  font-weight: 600;
}

.nameField {
  position: relative;
  width: 100%;
  margin-bottom: 16px;
}

/* text cursor */
.nameField::after {
  content: "";
  position: absolute;
  top: 7px;
  left: 109px;
  width: 1px;
  height: 19px;
  background-color: #1f2328;
}

.secretForm input {
  display: block;
  width: 100%;
  height: 32px;
  padding: 0 7px;
  border: 2px solid #0969da;
  border-radius: 6px;
  outline: none;
}

.secretForm textarea {
  width: 100%;
  height: 207px;
  margin: 4px 0 16px;
  border: 1px solid #d1d9e0;
  border-radius: 6px;
  resize: vertical;
}

.secretForm button {
  height: 32px;
  padding: 0 12px;
  border: 1px solid #1f7a36;
  border-radius: 6px;
  font-weight: 600;
  color: #fff;
  background-color: #1f883d;
}

/* red arrows */
.arrow {
  position: absolute;
  fill: none;
  stroke: #ed1c24;
  stroke-width: 5;
  stroke-linejoin: round;
}

.arrowTop {
  top: 0;
  left: 120px;
  width: 74px;
  height: 46px;
}

.arrowSide {
  top: -25px;
  left: 360px;
  width: 82px;
  height: 64px;
}
```
